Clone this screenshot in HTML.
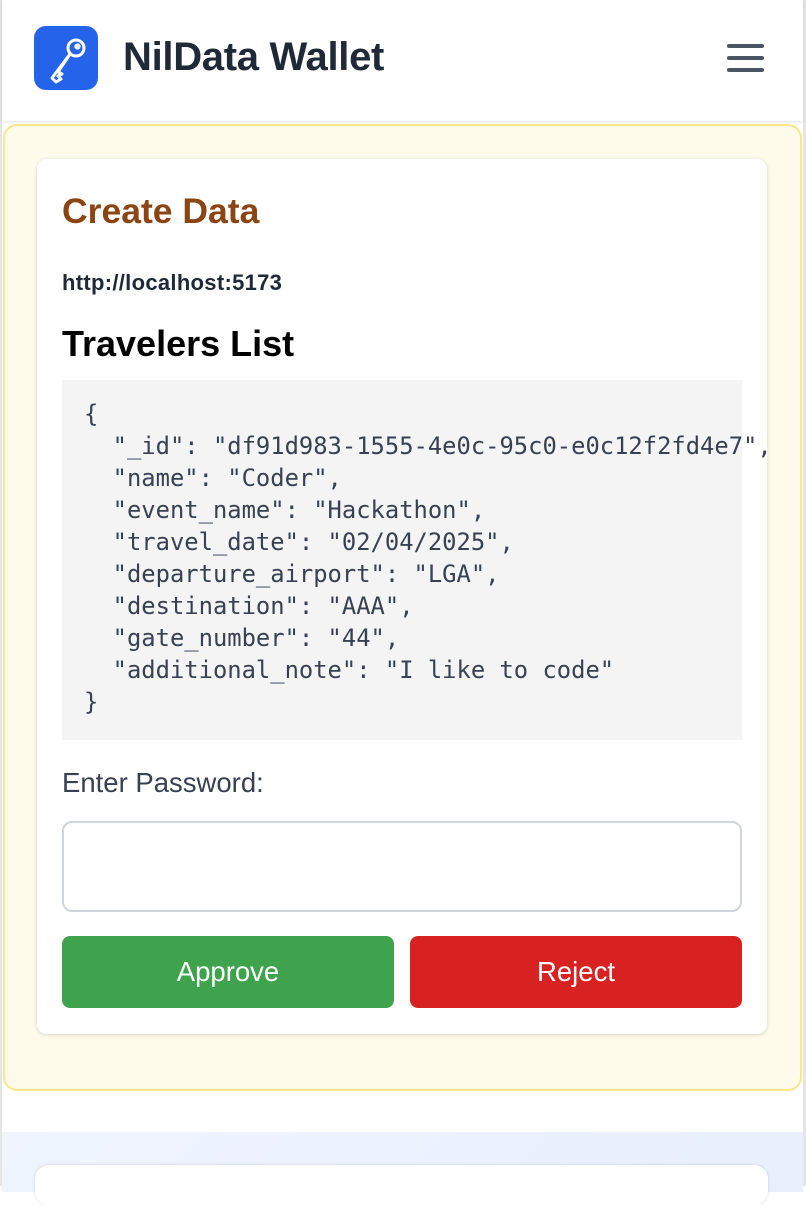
<!DOCTYPE html>
<html><head><meta charset="utf-8"><style>
*{box-sizing:border-box;margin:0;padding:0}
html,body{width:806px;height:1186px;overflow:hidden;background:#fff;font-family:"Liberation Sans",sans-serif}
.lb{position:absolute;left:0;top:0;width:2px;height:1186px;background:#e5e5e5}
.rb{position:absolute;right:0;top:0;width:3px;height:1186px;background:#e5e5e5}
.hdr{position:absolute;left:2px;top:0;width:801px;height:121px;background:#fff;box-shadow:0 1px 3px rgba(0,0,0,.12)}
.logo{position:absolute;left:32px;top:26px;width:64px;height:64px;border-radius:12px;background:#2563eb}
.title{position:absolute;left:121px;top:35px;font-size:40px;font-weight:bold;color:#1f2937;letter-spacing:-0.3px}
.menu{position:absolute;left:725px;top:44px;width:37px}
.menu div{height:4px;background:#4b5563;border-radius:2px;margin-bottom:8px}
.yp{position:absolute;left:3px;top:124px;width:799px;height:967px;background:#fefbeb;border:2px solid #fde68a;border-radius:14px}
.card{position:absolute;left:37px;top:159px;width:730px;height:875px;background:#fff;border-radius:10px;box-shadow:0 1px 4px rgba(0,0,0,.15)}
.h1{position:absolute;left:62px;top:191px;font-size:35.5px;font-weight:bold;color:#8b4513}
.url{position:absolute;left:62px;top:270px;font-size:22px;font-weight:bold;color:#1f2937;letter-spacing:0.3px}
.h2{position:absolute;left:62px;top:323px;font-size:36px;font-weight:bold;color:#000}
pre{position:absolute;left:62px;top:380px;width:680px;height:360px;background:#f4f4f4;padding:18px 0 0 22px;font-family:"DejaVu Sans Mono","Liberation Mono",monospace;font-size:23.8px;line-height:32px;color:#374151;overflow:visible;white-space:pre}
.lbl{position:absolute;left:62px;top:767px;font-size:27.5px;color:#374151}
.inp{position:absolute;left:62px;top:821px;width:680px;height:91px;border:2px solid #d1d5db;border-radius:10px}
.btn{position:absolute;top:936px;width:332px;height:72px;border-radius:8px;color:#fff;font-size:27.5px;text-align:center;line-height:72px}
.bp{position:absolute;left:2px;top:1132px;width:801px;height:60px;background:linear-gradient(135deg,#eff4fe,#e8effd)}
.c2{position:absolute;left:35px;top:1165px;width:733px;height:40px;background:#fff;border-radius:14px;box-shadow:0 0 3px rgba(0,0,0,.15)}
</style></head><body>
<div class="lb"></div><div class="rb"></div>
<div class="hdr">
<div class="logo"><svg width="64" height="64" viewBox="0 0 64 64"><g fill="none" stroke="#fff" stroke-width="3" stroke-linejoin="round"><circle cx="42" cy="22" r="8"/><path d="M36 28 L24 46 L28 48 L24 50 L27 53 L22 56 L18 52 Z"/><circle cx="43.5" cy="20.5" r="1.6" fill="#fff"/></g></svg></div>
<div class="title">NilData Wallet</div>
<div class="menu"><div></div><div></div><div></div></div>
</div>
<div class="yp"></div>
<div class="card"></div>
<div class="h1">Create Data</div>
<div class="url">http://localhost:5173</div>
<div class="h2">Travelers List</div>
<pre>{
  "_id": "df91d983-1555-4e0c-95c0-e0c12f2fd4e7",
  "name": "Coder",
  "event_name": "Hackathon",
  "travel_date": "02/04/2025",
  "departure_airport": "LGA",
  "destination": "AAA",
  "gate_number": "44",
  "additional_note": "I like to code"
}</pre>
<div class="lbl">Enter Password:</div>
<div class="inp"></div>
<div class="btn" style="left:62px;background:#3fa34d">Approve</div>
<div class="btn" style="left:410px;background:#d82222">Reject</div>
<div class="bp"></div>
<div class="c2"></div>
</body></html>
